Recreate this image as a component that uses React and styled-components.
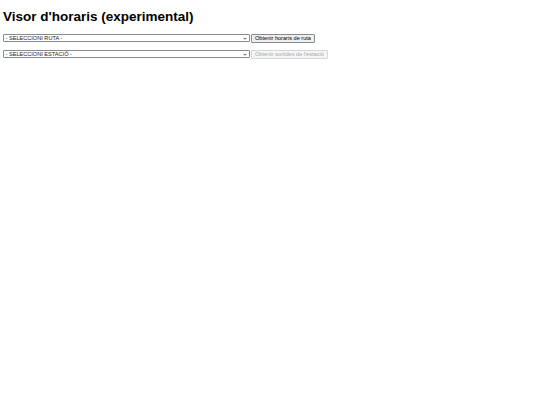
import React from "react";
import styled, { createGlobalStyle } from "styled-components";

const GlobalStyle = createGlobalStyle`
  html, body {
    margin: 0;
    padding: 0;
    background: #fff;
  }
  body {
    font-family: "Liberation Sans", Arial, sans-serif;
  }
`;

const Page = styled.div`
  padding: 0 3px;
  color: #000;
`;

const Title = styled.h1`
  font-size: 13.5px;
  font-weight: bold;
  margin: 0;
  padding: 9px 0 9px;
  line-height: 15.5px;
`;

const Row = styled.div`
  display: flex;
  align-items: center;
  gap: 1.5px;
  margin-bottom: 7px;
`;

const SelectBox = styled.div`
  position: relative;
  width: 246.5px;
  height: 8px;
  box-sizing: border-box;
  border: 0.6px solid #8a8a8a;
  border-radius: 1px;
  background: #fff;
  color: #222;
  font-size: 5.6px;
  line-height: 7px;
  padding-left: 1.5px;
  white-space: nowrap;
`;

const Chevron = styled.svg`
  position: absolute;
  right: 2px;
  top: 2px;
  width: 4px;
  height: 3px;
`;

const Button = styled.button`
  font-family: "Liberation Sans", Arial, sans-serif;
  font-size: 5.6px;
  line-height: 7px;
  height: 9px;
  padding: 0 3px;
  margin: 0;
  box-sizing: border-box;
  border: 0.6px solid ${(p) => (p.disabled ? "#d6d6d6" : "#8a8a8a")};
  border-radius: 1px;
  background: ${(p) => (p.disabled ? "#f6f6f6" : "#efefef")};
  color: ${(p) => (p.disabled ? "#a8a8a8" : "#000")};
  white-space: nowrap;
`;

const Select = ({ label }) => (
  <SelectBox>
    {label}
    <Chevron viewBox="0 0 8 6">
      <path d="M1 1.5 L4 4.5 L7 1.5" fill="none" stroke="#000" strokeWidth="1.4" />
    </Chevron>
  </SelectBox>
);

export default function App() {
  return (
    <>
      <GlobalStyle />
      <Page>
        <Title>Visor d'horaris (experimental)</Title>
        <Row>
          <Select label="- SELECCIONI RUTA -" />
          <Button>Obtenir horaris de ruta</Button>
        </Row>
        <Row>
          <Select label="- SELECCIONI ESTACIÓ -" />
          <Button disabled>Obtenir sortides de l'estació</Button>
        </Row>
      </Page>
    </>
  );
}
